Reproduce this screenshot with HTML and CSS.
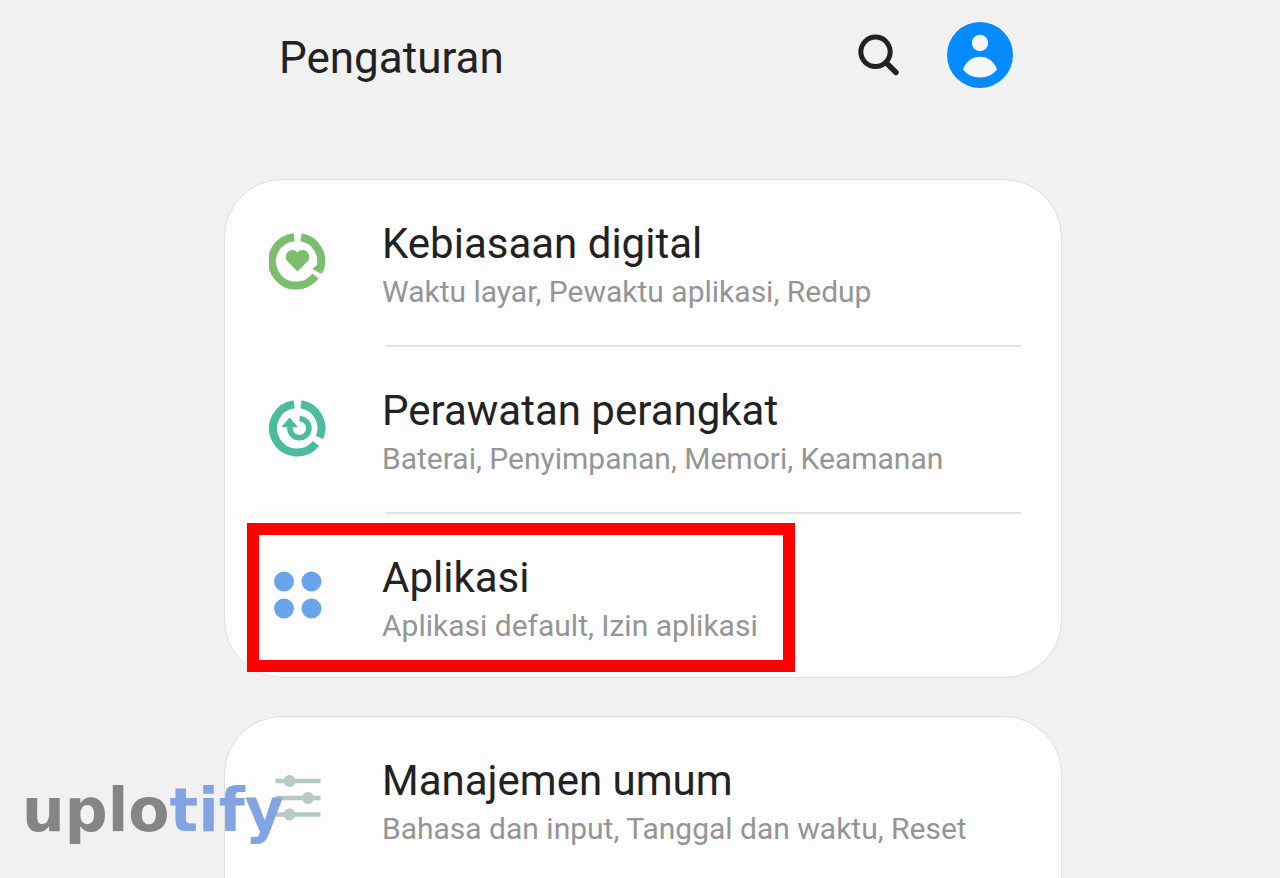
FILE: index.html
```html
<!DOCTYPE html>
<html lang="id">
<head>
<meta charset="utf-8">
<meta name="viewport" content="width=device-width, initial-scale=1">
<title>Pengaturan</title>
<link rel="stylesheet" href="styles.css">
</head>
<body>
<div class="page">
  <header class="header">
    <h1 class="header-title">Pengaturan</h1>
    <button class="icon-button" type="button" aria-label="Cari">
      <svg width="44" height="44" viewBox="0 0 44 44" fill="none" stroke="#222" aria-hidden="true">
        <circle cx="18.5" cy="18.8" r="14.7" stroke-width="5"/>
        <path d="M29 29.5 39 39.5" stroke-width="5.4" stroke-linecap="round"/>
      </svg>
    </button>
    <button class="icon-button" type="button" aria-label="Akun">
      <svg width="66" height="66" viewBox="0 0 66 66" aria-hidden="true">
        <circle cx="33" cy="33" r="33" fill="#048bfe"/>
        <circle cx="33" cy="21" r="8.2" fill="#f4f6f8"/>
        <path d="M16 47.500C19 39.500 25 34.800 33 34.800S47 39.500 50 47.500C46 52.800 40 55.500 33 55.500S20 52.800 16 47.500Z" fill="#f4f6f8"/>
      </svg>
    </button>
  </header>

  <main class="cards">
    <ul class="card">
      <li class="item">
        <a class="row" href="#digital">
          <svg class="row-icon" width="58" height="58" viewBox="0 0 58 58" aria-hidden="true">
            <g fill="none" stroke="#7dbd70" stroke-width="8">
              <path d="M25.200 5.300A24.200 24.200 0 1 0 46.500 44"/>
              <path d="M32 5.300A24.200 24.200 0 0 1 50.600 38"/>
            </g>
            <path d="M48 33 55 37l-2.500 5-9-5Z" fill="#7dbd70"/>
            <path d="M28.500 39.500 18.600 29.600C13 23 21.500 13.500 28.500 20.400 35.500 13.500 44 23 38.400 29.600Z" fill="#7dbd70"/>
          </svg>
          <span class="row-text">
            <span class="row-title">Kebiasaan digital</span>
            <span class="row-note">Waktu layar, Pewaktu aplikasi, Redup</span>
          </span>
        </a>
      </li>
      <li class="item">
        <a class="row" href="#perawatan">
          <svg class="row-icon" width="58" height="58" viewBox="0 0 58 58" aria-hidden="true">
            <g fill="none" stroke="#4cbb9f">
              <path d="M25.200 5.300A24.200 24.200 0 1 0 47 44.500" stroke-width="8"/>
              <path d="M32 5.300A24.200 24.200 0 0 1 50.600 38.500" stroke-width="8"/>
              <path d="M30.500 19.700A9.500 9.500 0 1 1 21 28" stroke-width="5.600"/>
            </g>
            <path d="M12.500 28 20.500 18.500 29 28Z" fill="#4cbb9f"/>
          </svg>
          <span class="row-text">
            <span class="row-title">Perawatan perangkat</span>
            <span class="row-note">Baterai, Penyimpanan, Memori, Keamanan</span>
          </span>
        </a>
      </li>
      <li class="item">
        <a class="row" href="#aplikasi">
          <svg class="row-icon" width="58" height="58" viewBox="0 0 58 58" fill="#68a5ea" aria-hidden="true">
            <circle cx="15" cy="15.500" r="10"/>
            <circle cx="42.500" cy="15.500" r="10"/>
            <circle cx="15" cy="42.500" r="10"/>
            <circle cx="42.500" cy="42.500" r="10"/>
          </svg>
          <span class="row-text">
            <span class="row-title">Aplikasi</span>
            <span class="row-note">Aplikasi default, Izin aplikasi</span>
          </span>
        </a>
        <span class="marker"></span>
      </li>
    </ul>

    <ul class="card card-continued">
      <li class="item">
        <a class="row" href="#umum">
          <svg class="row-icon" width="58" height="58" viewBox="0 0 58 58" aria-hidden="true">
            <path d="M6.500 12H51.500M6.500 29H51.500M6.500 45.500H51.500" stroke="#b7c9c7" stroke-width="4.600"/>
            <g fill="#b4cbc8">
              <circle cx="20.500" cy="12" r="6"/>
              <circle cx="39" cy="29" r="6"/>
              <circle cx="20.500" cy="45.500" r="6"/>
            </g>
          </svg>
          <span class="row-text">
            <span class="row-title">Manajemen umum</span>
            <span class="row-note">Bahasa dan input, Tanggal dan waktu, Reset</span>
          </span>
        </a>
      </li>
    </ul>
  </main>
  <div class="watermark">uplo<span class="watermark-accent">tify</span></div>
</div>
</body>
</html>
```
FILE: styles.css
```css
* {
  box-sizing: border-box;
}

body {
  margin: 0;
  background: #f1f1f1;
  color: #222;
  font-family: Roboto, "Liberation Sans", sans-serif;
}

.page {
  position: relative;
  height: 100vh;
  overflow: hidden;
  padding: 22px 17% 0 17.5%;
}

.header {
  display: flex;
  align-items: center;
  gap: 46px;
  padding: 0 49px 0 55px;
  margin-bottom: 91px;
}

.header-title {
  flex: 1;
  margin: 0;
  padding-top: 6px;
  font-size: 44px;
  font-weight: 400;
  line-height: 50px;
}

.icon-button {
  display: block;
  padding: 0;
  border: 0;
  background: none;
  cursor: pointer;
}

.icon-button svg {
  display: block;
}

.cards {
  display: grid;
  gap: 38px;
}

.card {
  margin: 0;
  padding: 0;
  list-style: none;
  background: #fdfdfd;
  border: 1px solid #dedede;
  border-radius: 58px;
}

.card-continued {
  padding-bottom: 60px;
}

.item {
  position: relative;
}

.item:not(:last-child)::after {
  content: "";
  display: block;
  height: 2px;
  margin: 0 40px 0 161px;
  background: #e2e2e2;
}

.row {
  display: flex;
  align-items: center;
  gap: 55px;
  padding: 39px 40px 30px 44px;
  color: inherit;
  text-decoration: none;
}

.item:last-child .row {
  padding-bottom: 28px;
}

.row-icon {
  flex: none;
  margin-bottom: 12px;
}

.row-text {
  display: grid;
}

.row-title {
  font-size: 42px;
  line-height: 50px;
}

.row-note {
  color: #959595;
  font-size: 30px;
  line-height: 46px;
}

.marker {
  position: absolute;
  top: 9px;
  left: 22px;
  width: 548px;
  height: 149px;
  border: 12px solid #fe0000;
  pointer-events: none;
}

.watermark {
  position: absolute;
  left: 22px;
  bottom: 33px;
  color: #858585;
  font-family: "DejaVu Sans", sans-serif;
  font-size: 60px;
  font-weight: 700;
  line-height: 70px;
}

.watermark-accent {
  color: #82a4e3;
}
```
